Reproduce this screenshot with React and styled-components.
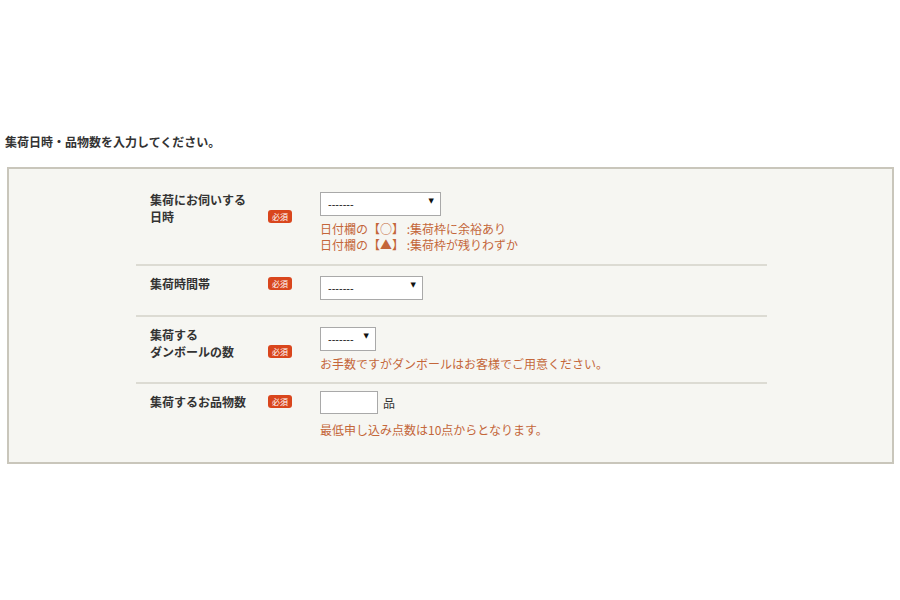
import styled, { createGlobalStyle } from "styled-components"

const GlobalStyle = createGlobalStyle`
    body {
        margin: 0;
        background: #ffffff;
        font-family: "Noto Sans CJK JP", "Liberation Sans", sans-serif;
        color: #333333;
    }
`

const rows = [
    {
        label: ["集荷にお伺いする", "日時"],
        field: { type: "select", width: 121 },
        notes: ["日付欄の【○】 :集荷枠に余裕あり", "日付欄の【▲】 :集荷枠が残りわずか"],
        pb: 11,
    },
    {
        label: ["集荷時間帯"],
        field: { type: "select", width: 103 },
        notes: [],
        pb: 18,
    },
    {
        label: ["集荷する", "ダンボールの数"],
        field: { type: "select", width: 56 },
        notes: ["お手数ですがダンボールはお客様でご用意ください。"],
        pb: 10,
    },
    {
        label: ["集荷するお品物数"],
        field: { type: "input", width: 58, unit: "品" },
        notes: ["最低申し込み点数は10点からとなります。"],
        pb: 24,
        last: true,
    },
]

export default function App() {
    return (
        <Page>
            <GlobalStyle />
            <Heading>集荷日時・品物数を入力してください。</Heading>

            <Box>
                <Rows>
                    {rows.map((row, i) => (
                        <Row key={i} $pb={row.pb} $last={row.last}>
                            <LabelCell>
                                <Label>
                                    {row.label.map((l, j) => (
                                        <div key={j}>{l}</div>
                                    ))}
                                </Label>
                                <Badge>必須</Badge>
                            </LabelCell>

                            <FieldCell>
                                {row.field.type === "select" ? (
                                    <SelectWrap $w={row.field.width}>
                                        <Select defaultValue="">
                                            <option value="">-------</option>
                                        </Select>
                                        <Arrow>▼</Arrow>
                                    </SelectWrap>
                                ) : (
                                    <InputLine>
                                        <Input type="text" $w={row.field.width} />
                                        <Unit>{row.field.unit}</Unit>
                                    </InputLine>
                                )}

                                {row.notes.length > 0 && (
                                    <Notes>
                                        {row.notes.map((n, j) => (
                                            <div key={j}>{n}</div>
                                        ))}
                                    </Notes>
                                )}
                            </FieldCell>
                        </Row>
                    ))}
                </Rows>
            </Box>
        </Page>
    )
}

const Page = styled.div`
    padding-top: 133px;
    width: 900px;
`

const Heading = styled.h2`
    margin: 0 0 17px 5px;
    font-size: 12px;
    line-height: 17px;
    font-weight: bold;
    color: #333333;
`

const Box = styled.div`
    margin: 0 6px 0 7px;
    padding: 13px 0 0 0;

    border: 2px solid #c9c6bb;
    background-color: #f6f6f2;
`

const Rows = styled.div`
    width: 631px;
    margin-left: 127px;
`

const Row = styled.div`
    display: flex;
    align-items: flex-start;

    padding: 7px 0 ${(p) => p.$pb}px 0;

    border-bottom: ${(p) => (p.$last ? "none" : "2px solid #dcdbd3")};
`

const LabelCell = styled.div`
    width: 170px;
    flex-shrink: 0;

    display: flex;
    align-items: flex-end;

    padding: 0 0 0 14px;
    box-sizing: border-box;
`

const Label = styled.div`
    width: 118px;
    padding-top: 2px;

    font-size: 12px;
    line-height: 17px;
    font-weight: bold;
    color: #333333;
`

const Badge = styled.span`
    width: 24px;
    height: 13px;
    margin-bottom: 2px;

    display: flex;
    align-items: center;
    justify-content: center;

    font-size: 8px;
    line-height: 13px;
    color: #ffffff;

    border-radius: 3px;
    background-color: #d9461d;
`

const FieldCell = styled.div`
    padding-left: 14px;

    display: flex;
    flex-direction: column;
`

const SelectWrap = styled.div`
    position: relative;
    width: ${(p) => p.$w}px;
    height: 24px;
`

const Select = styled.select`
    width: 100%;
    height: 100%;
    padding: 0 0 0 7px;

    appearance: none;
    -webkit-appearance: none;

    font-family: "Liberation Sans", sans-serif;
    font-size: 11px;
    color: #222222;

    border: 1px solid #a9a9a9;
    border-radius: 0;
    background-color: #ffffff;
    outline: none;
`

const Arrow = styled.span`
    position: absolute;
    right: 7px;
    top: 8px;

    font-family: "DejaVu Sans", sans-serif;
    font-size: 7px;
    line-height: 8px;
    color: #111111;
    pointer-events: none;
`

const InputLine = styled.div`
    display: flex;
    align-items: center;
    gap: 5px;
`

const Input = styled.input`
    width: ${(p) => p.$w}px;
    height: 23px;
    padding: 0 4px;
    box-sizing: border-box;

    border: 1px solid #a9a9a9;
    background-color: #ffffff;
    outline: none;
`

const Unit = styled.span`
    font-size: 12px;
    color: #333333;
`

const Notes = styled.div`
    margin-top: 8px;

    font-size: 12px;
    line-height: 16px;
    color: #c4663a;
`
